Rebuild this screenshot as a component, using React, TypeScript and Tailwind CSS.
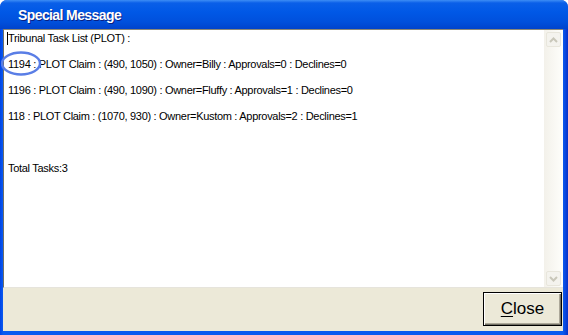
import React from "react";

const lines = [
    "1194 : PLOT Claim : (490, 1050) : Owner=Billy : Approvals=0 : Declines=0",
    "1196 : PLOT Claim : (490, 1090) : Owner=Fluffy : Approvals=1 : Declines=0",
    "118 : PLOT Claim : (1070, 930) : Owner=Kustom : Approvals=2 : Declines=1",
];

function ArrowUp() {
    return (
        <svg width="9" height="6" viewBox="0 0 9 6">
            <path d="M1 5 L4.5 1.5 L8 5" fill="none" stroke="#c9c7ba" strokeWidth="2" />
        </svg>
    );
}

function ArrowDown() {
    return (
        <svg width="9" height="6" viewBox="0 0 9 6">
            <path d="M1 1 L4.5 4.5 L8 1" fill="none" stroke="#c9c7ba" strokeWidth="2" />
        </svg>
    );
}

export default function App() {
    return (
        <div className="w-[568px] h-[335px] flex flex-col rounded-t-[7px] overflow-hidden bg-[#0b46d8] font-['Liberation_Sans',Arial,sans-serif]">
            {/* Title bar */}
            <div className="h-[29px] shrink-0 flex items-center pl-[18px] pt-[2px] bg-[linear-gradient(to_bottom,#3d8df5_0px,#0a5fe8_3px,#0058e6_12px,#0050dc_22px,#0043cc_29px)]">
                <span className="text-white font-bold text-[14px] tracking-[-0.6px] [text-shadow:1px_1px_0_#0a1f80] font-['Liberation_Sans',Arial,sans-serif]">
                    Special Message
                </span>
            </div>

            {/* Body */}
            <div className="flex-1 flex flex-col pl-[3px] pr-[5px] pb-[4px] bg-[linear-gradient(to_right,#0044e6,#0a5af0_3px,#0a5af0_calc(100%-5px),#0831c8)]">
                {/* Text box */}
                <div className="h-[259px] flex border-t border-t-[#8a8878] border-l border-l-[#716f64] border-b border-b-[#e6e4dc]">
                    <div className="flex-1 bg-white relative pl-[2px] pt-[2px] text-[11px] leading-[13px] tracking-[-0.3px] text-black">
                        <div className="relative pl-[2px]">
                            <span className="absolute left-[1px] top-0 w-px h-[13px] bg-black" />
                            Tribunal Task List (PLOT) :
                        </div>
                        <div className="h-[13px]" />
                        {lines.map((l) => (
                            <div key={l}>
                                <div className="pl-[2px]">{l}</div>
                                <div className="h-[13px]" />
                            </div>
                        ))}
                        <div className="h-[26px]" />
                        <div className="pl-[2px]">Total Tasks:3</div>

                        {/* annotation circle around the first task id */}
                        <svg className="absolute left-[-3px] top-[20px]" width="44" height="27" viewBox="0 0 44 27">
                            <ellipse cx="20" cy="13.5" rx="19" ry="11" fill="none" stroke="#5a7ee6" strokeWidth="2.5" />
                        </svg>
                    </div>
                    {/* Scrollbar */}
                    <div className="w-[19px] flex flex-col bg-[linear-gradient(to_right,#f3f1ea,#fefefb)] pt-[2px] pb-[1px] pl-[2px]">
                        <div className="w-[15px] h-[15px] rounded-[2px] border border-[#e8e6dc] bg-[#f4f3ee] flex items-center justify-center">
                            <ArrowUp />
                        </div>
                        <div className="flex-1" />
                        <div className="w-[15px] h-[15px] rounded-[2px] border border-[#e8e6dc] bg-[#f4f3ee] flex items-center justify-center">
                            <ArrowDown />
                        </div>
                    </div>
                </div>

                {/* Bottom panel */}
                <div className="flex-1 bg-[#ece9d8] flex justify-end items-start pt-[4px] pr-[1px]">
                    <button className="w-[79px] h-[34px] border border-black bg-[#ece9d8] shadow-[inset_1px_1px_0_#ffffff,inset_-1px_-1px_0_#716f64,inset_-2px_-2px_0_#aca899] flex items-center justify-center text-[17px] text-black font-['Liberation_Sans',Arial,sans-serif]">
                        <span><span className="underline underline-offset-2">C</span>lose</span>
                    </button>
                </div>
            </div>
        </div>
    );
}
